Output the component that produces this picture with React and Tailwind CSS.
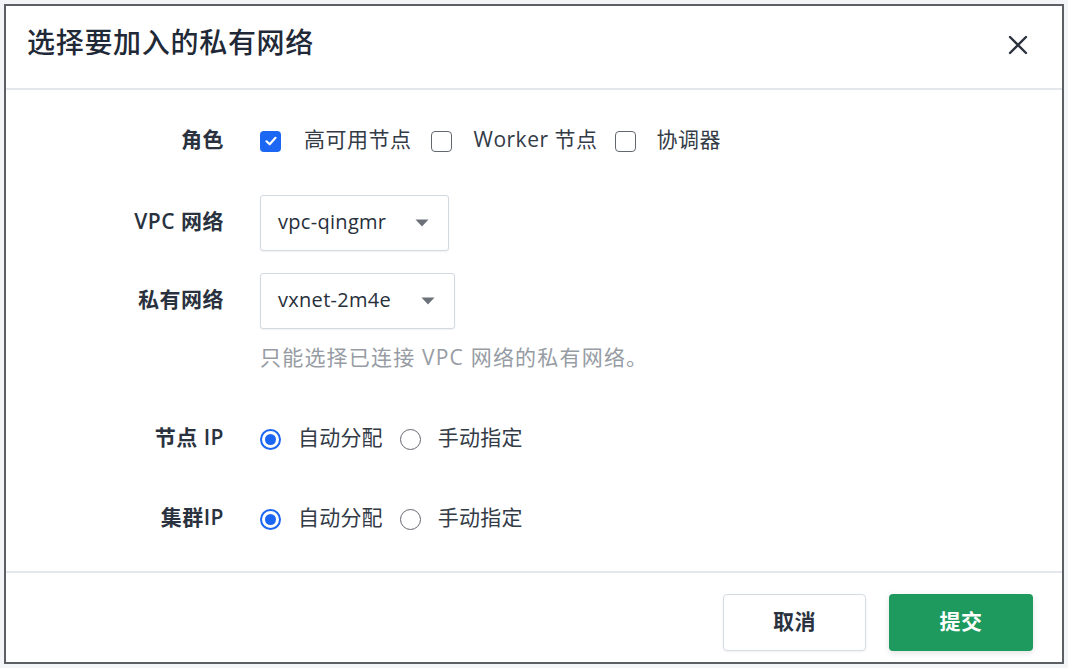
import React from "react";

const FONT = "font-['Open_Sans','Noto_Sans_CJK_SC',sans-serif]";

function Checkbox({ checked }) {
  if (checked) {
    return (
      <span className="flex h-[21px] w-[21px] shrink-0 items-center justify-center rounded-[4px] bg-[#1b66f2]">
        <svg width="14" height="14" viewBox="0 0 14 14" fill="none">
          <path d="M2.5 7.3 L5.7 10.3 L11.5 3.8" stroke="white" strokeWidth="2.2" strokeLinecap="round" strokeLinejoin="round" />
        </svg>
      </span>
    );
  }
  return <span className="h-[21px] w-[21px] shrink-0 rounded-[4px] border-[1.5px] border-[#63676e] bg-white" />;
}

function Radio({ checked }) {
  if (checked) {
    return (
      <span className="flex h-[21px] w-[21px] shrink-0 items-center justify-center rounded-full border-2 border-[#1b66f2] bg-white">
        <span className="h-[11px] w-[11px] rounded-full bg-[#1b66f2]" />
      </span>
    );
  }
  return <span className="h-[21px] w-[21px] shrink-0 rounded-full border-[1.5px] border-[#63676e] bg-white" />;
}

function Caret() {
  return (
    <svg width="14" height="8" viewBox="0 0 14 8">
      <path d="M0.5 0.5 L13.5 0.5 L7 7.5 Z" fill="#6b7079" />
    </svg>
  );
}

function Select({ value, width }) {
  return (
    <div
      className={`flex h-[56px] items-center justify-between rounded-[3px] border border-[#d3d9e2] bg-white pl-[17px] pr-[19px] shadow-[0_1px_2px_rgba(0,0,0,0.06)] ${width}`}
    >
      <span className="-mt-[2px] text-[20px] tracking-[0.3px] text-[#272f3b]">{value}</span>
      <Caret />
    </div>
  );
}

function Label({ children }) {
  return <div className="-mt-[2px] text-right text-[21px] font-semibold tracking-[0.5px] text-[#2a3240]">{children}</div>;
}

function RadioGroup() {
  return (
    <div className="flex items-center text-[21px] tracking-[0.2px] text-[#333b47]">
      <Radio checked />
      <span className="-mt-[2px] ml-[17px]">自动分配</span>
      <span className="ml-[17px] flex"><Radio /></span>
      <span className="-mt-[2px] ml-[17px]">手动指定</span>
    </div>
  );
}

export default function App() {
  return (
    <div className={`h-[668px] w-[1068px] bg-[#f4f5f7] p-[4px] ${FONT}`}>
      <div className="flex h-[660px] flex-col border-2 border-[#5c5f64] bg-white">
        {/* header */}
        <div className="flex h-[84px] shrink-0 items-center justify-between border-b-2 border-[#e3e7ec] pl-[21px] pr-[34px]">
          <h1 className="-mt-[11px] text-[28px] font-medium tracking-[0.7px] text-[#1f2937]">选择要加入的私有网络</h1>
          <svg width="20" height="20" viewBox="0 0 20 20" className="-mt-[4px]">
            <path d="M2 2 L18 18 M18 2 L2 18" stroke="#2b323e" strokeWidth="2.4" strokeLinecap="round" />
          </svg>
        </div>

        {/* body */}
        <div className="flex flex-1 flex-col pt-[31px]">
          <div className="grid grid-cols-[218px_1fr] items-center gap-x-[36px]">
            <div className="flex h-[40px] items-center justify-end"><Label>角色</Label></div>
            <div className="flex h-[40px] items-center text-[21px] tracking-[0.5px] text-[#333b47]">
              <Checkbox checked />
              <span className="-mt-[2px] ml-[23px]">高可用节点</span>
              <span className="ml-[19px] flex"><Checkbox /></span>
              <span className="-mt-[2px] ml-[22px]">Worker 节点</span>
              <span className="ml-[18px] flex"><Checkbox /></span>
              <span className="-mt-[2px] ml-[20px]">协调器</span>
            </div>

            <div className="mt-[34px] flex justify-end"><Label>VPC 网络</Label></div>
            <div className="mt-[34px]"><Select value="vpc-qingmr" width="w-[189px]" /></div>

            <div className="mt-[22px] flex justify-end"><Label>私有网络</Label></div>
            <div className="mt-[22px]"><Select value="vxnet-2m4e" width="w-[195px]" /></div>

            <div />
            <div className="mt-[15px] flex h-[28px] items-center text-[21px] tracking-[1.2px] text-[#979ca4]">
              只能选择已连接 VPC 网络的私有网络。
            </div>

            <div className="mt-[47px] flex h-[40px] items-center justify-end"><Label>节点 IP</Label></div>
            <div className="mt-[47px] flex h-[40px] items-center"><RadioGroup /></div>

            <div className="mt-[40px] flex h-[40px] items-center justify-end"><Label>集群IP</Label></div>
            <div className="mt-[40px] flex h-[40px] items-center"><RadioGroup /></div>
          </div>
        </div>

        {/* footer */}
        <div className="flex h-[91px] shrink-0 items-start justify-end gap-[23px] border-t-2 border-[#e3e7ec] pr-[29px] pt-[21px]">
          <button className="flex h-[57px] w-[143px] items-center justify-center rounded-[4px] border border-[#d5dbe3] bg-white pb-[2px] text-[21px] font-semibold tracking-[0.5px] text-[#2a3240] shadow-[0_1px_3px_rgba(0,0,0,0.06)]">
            取消
          </button>
          <button className="flex h-[57px] w-[144px] items-center justify-center rounded-[4px] bg-[#1e9a5f] pb-[2px] text-[21px] font-semibold tracking-[0.5px] text-white shadow-[0_2px_6px_rgba(0,0,0,0.12)]">
            提交
          </button>
        </div>
      </div>
    </div>
  );
}
